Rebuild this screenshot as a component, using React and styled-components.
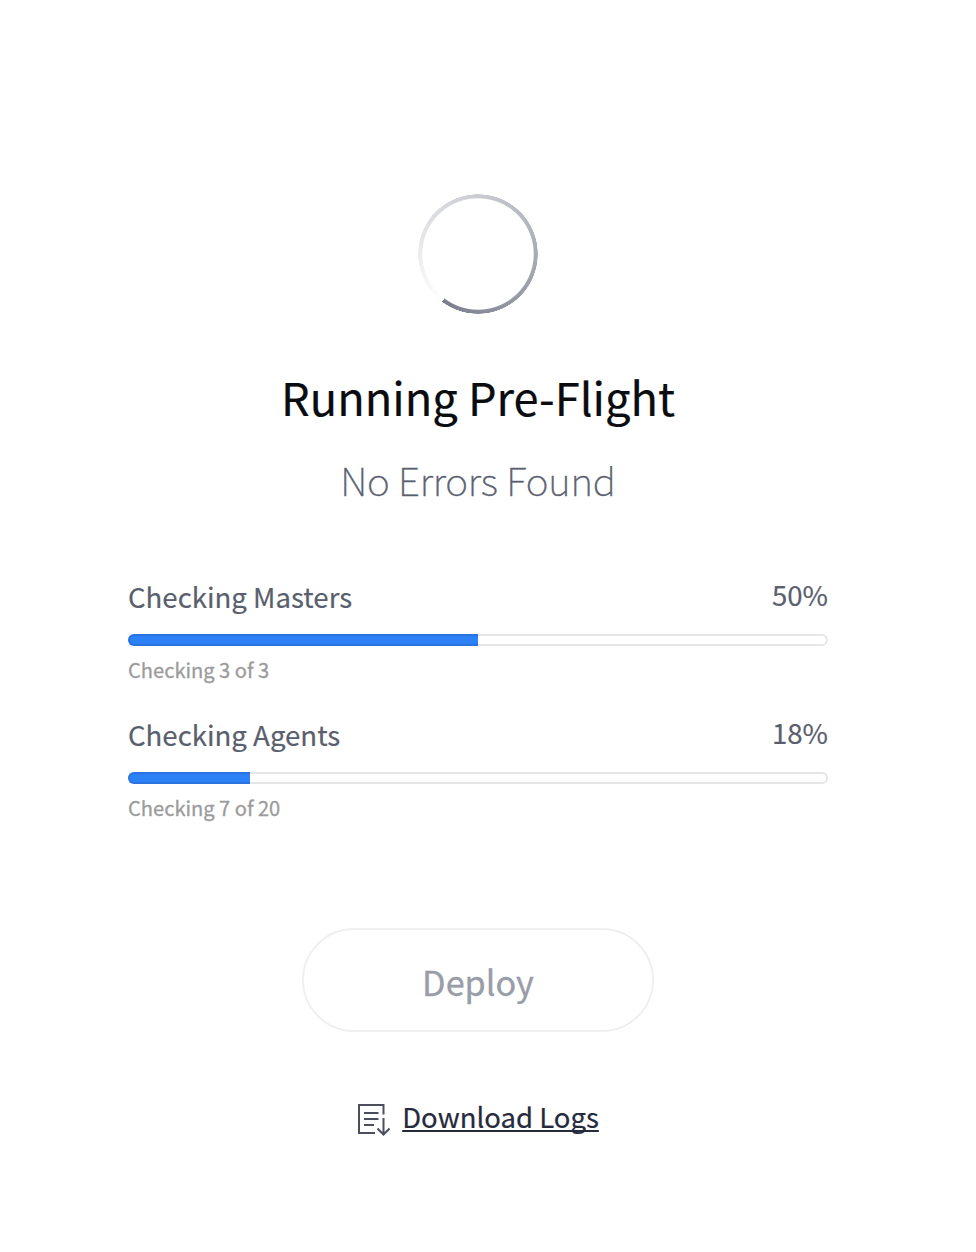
import React from "react";
import styled, { createGlobalStyle } from "styled-components";

const GlobalStyle = createGlobalStyle`
  *, *::before, *::after { box-sizing: border-box; }
  body {
    margin: 0;
    background: #ffffff;
    font-family: "Noto Sans CJK SC", "Noto Sans", sans-serif;
  }
`;

const Page = styled.main`
  width: 956px;
  min-height: 1252px;
  padding: 194px 128px 0;
  display: flex;
  flex-direction: column;
  align-items: center;
`;

const Spinner = styled.div`
  width: 120px;
  height: 120px;
  border-radius: 50%;
  background: conic-gradient(from 217deg, rgba(122, 126, 140, 0) 0deg, #7a7e8c 360deg);
  mask: radial-gradient(closest-side, transparent 55.2px, #000 56.2px, #000 59.6px, transparent 60px);
`;

const Title = styled.h1`
  margin: 47px 0 0;
  font-size: 45.2px;
  line-height: 72px;
  font-weight: 400;
  color: #0b0c10;
  -webkit-text-stroke: 0.2px currentColor;
  white-space: nowrap;
`;

const Subtitle = styled.h2`
  margin: 16px 0 0;
  font-size: 38.8px;
  line-height: 60px;
  font-weight: 100;
  letter-spacing: -0.15px;
  color: #5a5f70;
  -webkit-text-stroke: 0.5px currentColor;
  white-space: nowrap;
`;

const Checks = styled.section`
  width: 100%;
  margin-top: 65px;
  display: flex;
  flex-direction: column;
  gap: 18px;
`;

const Check = styled.div`
  height: 120px;
`;

const CheckHeader = styled.div`
  display: flex;
  justify-content: space-between;
  font-size: 27.6px;
  line-height: 44px;
  height: 60px;
  color: #5a5f6e;
  -webkit-text-stroke: 0.2px currentColor;
`;

const CheckName = styled.span`
  white-space: nowrap;
`;

const Percent = styled.span`
  line-height: 40px;
`;

const Track = styled.div`
  height: 12px;
  border: 2px solid #e6e6e6;
  border-radius: 6px;
`;

const Fill = styled.div`
  height: 12px;
  margin: -2px;
  border: 2px solid #2b73e0;
  border-right: 0;
  border-radius: 6px 0 0 6px;
  background: #2d81f7;
`;

const Detail = styled.p`
  margin: 8px 0 0;
  font-size: 20.1px;
  line-height: 32px;
  color: #9b9b9b;
  -webkit-text-stroke: 0.3px currentColor;
`;

const DeployButton = styled.button`
  width: 352px;
  height: 104px;
  margin-top: 96px;
  padding: 2px 0 0;
  border: 2px solid #efefef;
  border-radius: 52px;
  background: #fff;
  font: 400 34.2px "Noto Sans CJK SC", sans-serif;
  color: #989da8;
  -webkit-text-stroke: 0.3px currentColor;
`;

const LogsLink = styled.a`
  margin-top: 62px;
  padding-left: 1px;
  display: flex;
  align-items: center;
  gap: 12px;
  font-size: 27.5px;
  line-height: 44px;
  color: #252a3d;
`;

const LogsText = styled.span`
  text-decoration: underline;
  text-decoration-thickness: 2px;
  text-underline-offset: 2px;
  text-decoration-skip-ink: none;
  -webkit-text-stroke: 0.2px currentColor;
`;

const IconFrame = styled.svg`
  display: block;
  margin-top: 8px;
`;

const checks = [
  { name: "Checking Masters", percent: "50%", width: 350, detail: "Checking 3 of 3" },
  { name: "Checking Agents", percent: "18%", width: 122, detail: "Checking 7 of 20" },
];

const LogIcon = () => (
  <IconFrame width="32" height="32" viewBox="0 0 32 32" fill="none" stroke="#4b4e5e" strokeWidth="2">
    <path d="M25.5 10.5V1H1V29H17" />
    <path d="M6 9H20.5M6 15H20.5M6 21H16" />
    <path d="M25.5 14V30.5M19.5 24.5L25.5 30.5L31.5 24.5" />
  </IconFrame>
);

export default function App() {
  return (
    <Page>
      <GlobalStyle />
      <Spinner />
      <Title>Running Pre-Flight</Title>
      <Subtitle>No Errors Found</Subtitle>
      <Checks>
        {checks.map((c) => (
          <Check key={c.name}>
            <CheckHeader>
              <CheckName>{c.name}</CheckName>
              <Percent>{c.percent}</Percent>
            </CheckHeader>
            <Track>
              <Fill style={{ width: c.width }} />
            </Track>
            <Detail>{c.detail}</Detail>
          </Check>
        ))}
      </Checks>
      <DeployButton>Deploy</DeployButton>
      <LogsLink>
        <LogIcon />
        <LogsText>Download Logs</LogsText>
      </LogsLink>
    </Page>
  );
}
